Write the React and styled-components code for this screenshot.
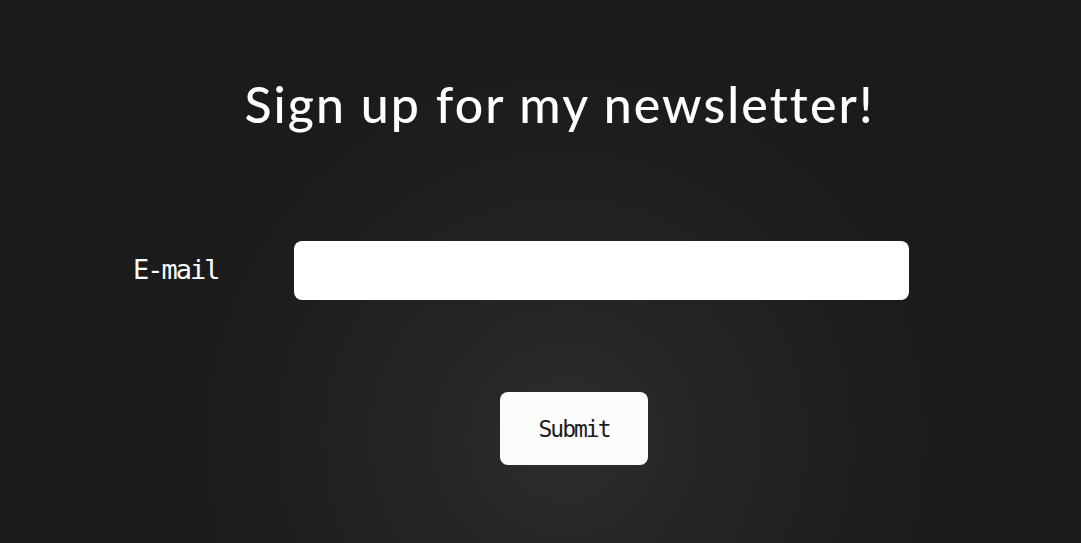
import styled, { createGlobalStyle } from 'styled-components'

const GlobalStyle = createGlobalStyle`
    html, body {
        margin: 0;
        padding: 0;
        height: 100%;
    }
    body {
        background-color: #1b1b1b;
    }
`
const Page = styled.div`
    width: 100%;
    height: 543px;
    overflow: hidden;
    background: radial-gradient(circle at 565px 440px, #2d2d2d 0px, #242424 160px, #1e1e1e 300px, #1b1b1b 420px);
    display: flex;
    flex-direction: column;
    align-items: center;
`
const Title = styled.h1`
    margin: 72px 0 0 38px;
    font-family: Lato, "Open Sans", sans-serif;
    font-weight: 500;
    font-size: 50px;
    line-height: 64px;
    color: #ffffff;
    letter-spacing: 2.1px;
`
const Form = styled.form`
    width: 100%;
    display: flex;
    flex-direction: column;
    align-items: center;
`
const Row = styled.div`
    align-self: flex-start;
    display: flex;
    align-items: center;
    margin: 105px 0 0 133px;
    gap: 75px;
`
const Label = styled.label`
    width: 86px;
    font-family: "DejaVu Sans Mono", monospace;
    font-weight: 400;
    font-size: 27px;
    letter-spacing: -2px;
    color: #ffffff;
    margin-top: -3px;
`
const Input = styled.input`
    box-sizing: border-box;
    width: 615px;
    height: 59px;
    border: none;
    border-radius: 8px;
    background-color: #ffffff;
    outline: none;
`
const SubmitButton = styled.button`
    margin: 92px 0 0 67px;
    width: 148px;
    height: 73px;
    border: none;
    border-radius: 8px;
    background-color: #fcfcfc;
    font-family: "DejaVu Sans Mono", monospace;
    font-size: 23px;
    letter-spacing: -2px;
    color: #1b1b1b;
    cursor: pointer;
`

const App = () => {
    return (
        <Page>
            <GlobalStyle />
            <Title>Sign up for my newsletter!</Title>
            <Form onSubmit={(e) => e.preventDefault()}>
                <Row>
                    <Label htmlFor="email">E-mail</Label>
                    <Input id="email" type="email" name="email" />
                </Row>
                <SubmitButton type="submit">Submit</SubmitButton>
            </Form>
        </Page>
    )
}

export default App
